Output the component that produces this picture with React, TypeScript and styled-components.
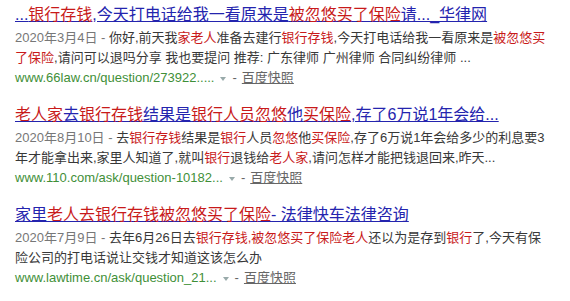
import React from "react";
import styled, { createGlobalStyle } from "styled-components";

const Global = createGlobalStyle`
  html, body { margin: 0; padding: 0; background: #fff; }
  body { font-family: Arial, "Liberation Sans", "Noto Sans CJK SC", sans-serif; }
`;

const Page = styled.div`
  width: 570px;
  height: 301px;
  overflow: hidden;
  padding: 4px 0 0 15px;
  box-sizing: border-box;
  display: flex;
  flex-direction: column;
  gap: 16px;
`;

const Result = styled.div`
  display: flex;
  flex-direction: column;
`;

const Title = styled.a`
  display: block;
  font-size: 16px;
  line-height: 22px;
  height: 22px;
  color: #2424ae;
  text-decoration: underline;
  white-space: nowrap;
  margin-bottom: 2px;
  cursor: pointer;
`;

const Em = styled.em`
  font-style: normal;
  color: #c81a1a;
`;

const Snippet = styled.div`
  font-size: 13px;
  line-height: 20px;
  color: #383838;
`;

const Line = styled.div`
  white-space: nowrap;
  height: 20px;
`;

const Date = styled.span`
  color: #777;
`;

const UrlRow = styled.div`
  font-size: 13px;
  line-height: 20px;
  height: 20px;
  display: flex;
  align-items: center;
  white-space: nowrap;
  color: #666;
`;

const Url = styled.span`
  color: #3f8f38;
`;

const Arrow = styled.span`
  display: inline-block;
  width: 0;
  height: 0;
  margin: 2px 6px 0 6px;
  border-left: 3.5px solid transparent;
  border-right: 3.5px solid transparent;
  border-top: 4px solid #9aa;
`;

const Snap = styled.a`
  color: #666;
  text-decoration: underline;
  margin-left: 5px;
`;

type Seg = string | { r: string };

const Segs: React.FC<{ segs: Seg[] }> = ({ segs }) => (
  <>
    {segs.map((s, i) =>
      typeof s === "string" ? <React.Fragment key={i}>{s}</React.Fragment> : <Em key={i}>{s.r}</Em>
    )}
  </>
);

interface Item {
  title: Seg[];
  date: string;
  lines: Seg[][];
  url: string;
}

const items: Item[] = [
  {
    title: ["...", { r: "银行存钱" }, ",今天打电话给我一看原来是", { r: "被忽悠买了保险" }, "请..._华律网"],
    date: "2020年3月4日 - ",
    lines: [
      ["你好,前天我", { r: "家老人" }, "准备去建行", { r: "银行存钱" }, ",今天打电话给我一看原来是", { r: "被忽悠买" }],
      [{ r: "了保险" }, ",请问可以退吗分享 我也要提问 推荐: 广东律师 广州律师 合同纠纷律师 ..."],
    ],
    url: "www.66law.cn/question/273922.....",
  },
  {
    title: [{ r: "老人家" }, "去", { r: "银行存钱" }, "结果是", { r: "银行人员忽悠" }, "他", { r: "买保险" }, ",存了6万说1年会给..."],
    date: "2020年8月10日 - ",
    lines: [
      ["去", { r: "银行存钱" }, "结果是", { r: "银行" }, "人员", { r: "忽悠" }, "他", { r: "买保险" }, ",存了6万说1年会给多少的利息要3"],
      ["年才能拿出来,家里人知道了,就叫", { r: "银行" }, "退钱给", { r: "老人家" }, ",请问怎样才能把钱退回来,昨天..."],
    ],
    url: "www.110.com/ask/question-10182...",
  },
  {
    title: ["家里", { r: "老人去银行存钱被忽悠买了保险" }, "- 法律快车法律咨询"],
    date: "2020年7月9日 - ",
    lines: [
      ["去年6月26日去", { r: "银行存钱,被忽悠买了保险老人" }, "还以为是存到", { r: "银行" }, "了,今天有保"],
      ["险公司的打电话说让交钱才知道这该怎么办"],
    ],
    url: "www.lawtime.cn/ask/question_21...",
  },
];

export default function App() {
  return (
    <>
      <Global />
      <Page>
        {items.map((it, i) => (
          <Result key={i}>
            <Title>
              <Segs segs={it.title} />
            </Title>
            <Snippet>
              {it.lines.map((ln, j) => (
                <Line key={j}>
                  {j === 0 && <Date>{it.date}</Date>}
                  <Segs segs={ln} />
                </Line>
              ))}
            </Snippet>
            <UrlRow>
              <Url>{it.url}</Url>
              <Arrow />
              -
              <Snap>百度快照</Snap>
            </UrlRow>
          </Result>
        ))}
      </Page>
    </>
  );
}
